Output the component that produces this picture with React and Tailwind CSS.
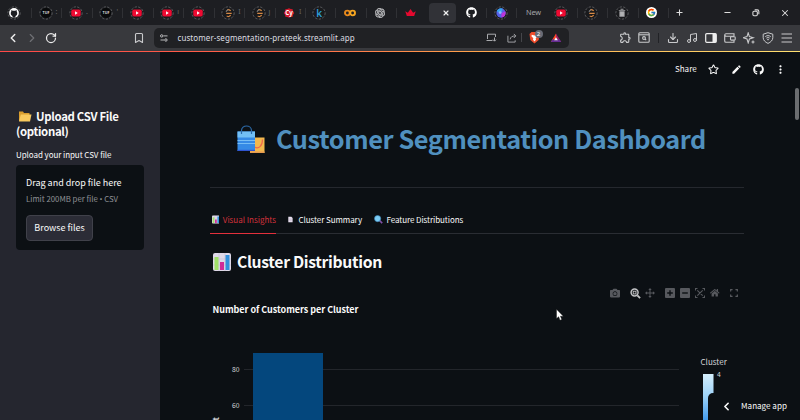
import React from "react";
import { ChevronLeft, ChevronRight, RotateCw, Bookmark, Download, Music, Star, X, Plus, Minus } from "lucide-react";
import { FaGithub, FaCamera, FaHome } from "react-icons/fa";
import { MdEdit, MdMoreVert, MdOutlineExtension } from "react-icons/md";
import { SiOpenai } from "react-icons/si";
import { FcGoogle } from "react-icons/fc";

const Ring = ({ children }) => (
  <svg viewBox="0 0 16 16" className="size-[14px] shrink-0">
    <circle cx="8" cy="8" r="7" fill="#191a1d" stroke="#77787b" strokeWidth="0.8" strokeDasharray="2.6 1.6" />
    {children}
  </svg>
);

const YouTube = () => (
  <Ring>
    <rect x="2.6" y="4" width="10.8" height="8" rx="2" fill="#ee0b32" />
    <path d="M6.9 6.1 10 8 6.900 9.900z" fill="#fff" />
  </Ring>
);

const Tuf = () => (
  <Ring>
    <circle cx="8" cy="8" r="5.800" fill="#08090a" />
    <text x="8" y="9.600" fontSize="4.200" fontWeight="700" fill="#ddd" textAnchor="middle">TUF</text>
  </Ring>
);

const Leet = () => (
  <Ring>
    <path d="M8.500 3.500 5.600 6.300" fill="none" stroke="#8b8b8b" strokeWidth="1.200" />
    <path d="M7.500 4.700c1.200-.9 2.600-.2 3.500 1M6 8.300h6.200M6.500 11.300c1.500 1.300 3.200.8 4.500-.8" fill="none" stroke="#d98a45" strokeWidth="1.400" />
  </Ring>
);

const Tab = ({ children, label, sep = true }) => (
  <div className="relative flex h-full w-[30.45px] shrink-0 items-center pl-[6.500px]">
    {children}
    {label && <span className="ml-[3px] text-[7px] text-[#66676b]">{label}</span>}
    {sep && <span className="absolute right-0 top-[8px] h-[10px] w-px bg-[#303135]" />}
  </div>
);

const TabBar = () => (
  <div className="flex h-[25px] shrink-0 items-center bg-[#1d1e22] font-['Noto_Sans']">
    <div className="relative flex h-full w-8 shrink-0 items-center pl-[7px]">
      <Ring><circle cx="8" cy="8" r="5.600" fill="#fff" /><path d="M6.300 13.500v-2.200C4.900 11 4.300 9.900 4.300 8.300c0-.9.2-1.400.6-1.900l.1-1.800 1.600.8h2.800l1.600-.8.1 1.800c.4.5.6 1 .6 1.900 0 1.600-.6 2.700-2 3v2.200z" fill="#1d1e22" /></Ring>
      <span className="absolute right-0 top-[8px] h-[10px] w-px bg-[#303135]" />
    </div>
    <Tab label=":"><Tuf /></Tab>
    <Tab label="."><YouTube /></Tab>
    <Tab label="'"><Tuf /></Tab>
    <Tab><YouTube /></Tab>
    <Tab label="ı"><YouTube /></Tab>
    <Tab><YouTube /></Tab>
    <Tab label="I"><Leet /></Tab>
    <Tab label="ȷ"><Leet /></Tab>
    <Tab label="I">
      <svg viewBox="0 0 16 16" className="size-[14px] shrink-0">
        <path d="m8 2.500 2 .9 2.200.2.200 2.200L14 8l-1.600 2.200-.2 2.200-2.200.2-2 .9-2-.9-2.200-.2-.2-2.200L2 8l1.600-2.200.2-2.200L6 3.400z" fill="#d31a2b" />
        <text x="8" y="10.300" fontSize="7" fontWeight="700" fill="#fff" textAnchor="middle">Cy</text>
      </svg>
    </Tab>
    <Tab>
      <Ring><text x="8.200" y="12" fontSize="11.500" fontWeight="600" fill="#2e9fd6" textAnchor="middle">k</text></Ring>
    </Tab>
    <Tab>
      <svg viewBox="0 0 16 16" className="size-[14px] shrink-0" fill="none" strokeWidth="2.200">
        <circle cx="5" cy="8" r="2.700" stroke="#e98a1c" /><circle cx="11" cy="8" r="2.700" stroke="#f6a621" />
      </svg>
    </Tab>
    <Tab><span className="pl-[2px]"><SiOpenai size={10} color="#c8c9cb" stroke="#c8c9cb" strokeWidth={0.8} /></span></Tab>
    <div className="flex h-full w-8 shrink-0 items-center pl-[8px]">
      <svg viewBox="0 0 12 8" className="h-[7px] w-[11px]"><path d="M0 2.500 3 4.300 6 0l3 4.300L12 2.500 10.200 8H1.800z" fill="#e5092f" /></svg>
    </div>
    <div className="flex h-[20px] w-[27px] shrink-0 items-center justify-center rounded-[4px] bg-[#313237] pl-[7px]"><X size={8} strokeWidth={3.500} color="#eee" /></div>
    <div className="relative flex h-full w-[30.400px] shrink-0 items-center justify-center"><FaGithub size={11} color="#fff" /><span className="absolute right-0 top-[8px] h-[10px] w-px bg-[#303135]" /></div>
    <Tab>
      <span className="ml-[1px]"><Ring>
        <circle cx="8" cy="8" r="5.300" fill="#5661e8" /><path d="M3 6a5.300 5.300 0 0 1 7-2.900L8 8z" fill="#35a7ef" /><path d="M8.500 8.200 13 6a5.200 5.200 0 0 1-4.500 7.200z" fill="#bb36d9" /><circle cx="7" cy="7.500" r="1.600" fill="#8fb8ff" />
      </Ring></span>
    </Tab>
    <div className="relative flex h-full w-[30.400px] shrink-0 items-center pl-[9px] text-[7.300px] text-[#a5a6a9]"><span className="tracking-[-0.2px]">New</span></div>
    <Tab><YouTube /></Tab>
    <Tab><Leet /></Tab>
    <Tab><Ring><path d="M4.300 4.500h7.400v1H4.300zM6.300 3.200h3.400v1.200H6.300zM5 6h6v6.300H5z" fill="#a4a5a8" /><path d="M7 7v4.300M9 7v4.300" stroke="#c8c8c8" strokeWidth=".7" /></Ring></Tab>
    <Tab><span className="ml-[1px] flex size-[11px] items-center justify-center rounded-full bg-white"><FcGoogle size={9} /></span></Tab>
    <div className="ml-[6px] flex w-[10px] shrink-0"><Plus size={9} strokeWidth={2.800} color="#ddd" /></div>
    <div className="ml-auto mr-[10px] flex items-center gap-[20px]">
      <Minus size={9} strokeWidth={3} color="#ddd" />
      <svg viewBox="0 0 9 9" className="size-[8px]" fill="none" stroke="#ddd" strokeWidth="1.200"><rect x="1" y="2.500" width="5" height="5" rx="1.200" /><path d="M3 1h3a1.700 1.700 0 0 1 1.700 1.700V6" /></svg>
      <X size={10} strokeWidth={2.500} color="#ddd" />
    </div>
  </div>
);

const Toolbar = () => (
  <div className="flex h-[26px] shrink-0 items-center bg-[#38393d] pb-[1px] text-[#c9cacc]">
    <ChevronLeft size={14} strokeWidth={2.500} className="ml-[6px]" color="#ececec" />
    <ChevronRight size={14} strokeWidth={2} className="ml-[5px]" color="#6f7074" />
    <RotateCw size={12} strokeWidth={2.500} className="ml-[6px]" color="#ececec" />
    <Bookmark size={12} strokeWidth={2.200} className="ml-[76px]" />
    <div className="ml-[8.500px] flex h-[20px] w-[415px] shrink-0 items-center rounded-[5px] bg-[#202124] pl-[6px]">
      <svg viewBox="0 0 8 8" className="size-[8px]" fill="none" stroke="#c9cacc" strokeWidth="0.900"><circle cx="1.700" cy="1.900" r="1.200" /><path d="M3.500 1.900h4M.5 6h3.500" /><circle cx="5.900" cy="6" r="1.200" /></svg>
      <span className="ml-[10px] w-[180px] whitespace-nowrap font-['Noto_Sans'] text-[8px] tracking-[0.080px] text-[#dcdde0]">customer-segmentation-prateek.streamlit.app</span>
      <svg viewBox="0 0 11 9" className="ml-[128px] h-[9px] w-[11px]" fill="none" stroke="#a9aaad" strokeWidth="1"><path d="M1.500 6V1.200h8V4M.5 7.500h6M8.500 4.500v3.500M7 6.700l1.500 1.500L10 6.700" /></svg>
      <svg viewBox="0 0 11 11" className="ml-[10px] size-[10px]" fill="none" stroke="#a9aaad" strokeWidth="1"><path d="M1 3v7h8V8M3.500 7c.3-2.600 2-3.800 6-3.800M7.500 1l2.200 2.200-2.200 2.300" /></svg>
      <span className="ml-[4px] h-[9px] w-px bg-[#45464a]" />
      <span className="relative ml-[7px] h-[13px] w-[14px]">
        <svg viewBox="0 0 11 13" className="h-[13px] w-[11px]"><path d="M2.500 1h6L10.500 3l-.8 6-4.200 3.500L1.300 9 .5 3z" fill="#f04d2b" /><path d="m2.800 3.800 2.700.6 2.700-.6.4 1.400-1.900 2.100.3 1.400-1.500 1.700L4 8.700l.3-1.400-1.900-2.100z" fill="#fff" /></svg>
        <span className="absolute left-[6px] top-[-1px] flex size-[8px] items-center justify-center rounded-full bg-[#686b75] font-['Noto_Sans'] text-[6px] leading-none text-white">2</span>
      </span>
      <svg viewBox="0 0 12 11" className="ml-[7px] h-[10px] w-[12px]"><path d="M6 .5.300 10h5.700z" fill="#ff4724" /><path d="m6 .5 5.700 9.500H6z" fill="#9e1f63" /><path d="M.3 10h11.400L9.900 7H2.100z" fill="#662d91" /><path d="M6 4.600 8 8H4z" fill="#fff" /></svg>
    </div>
    <div className="ml-[50px] flex items-center">
      <MdOutlineExtension size={13} />
      <svg viewBox="0 0 12 11" className="ml-[6px] h-[11px] w-[12px]" fill="none" stroke="currentColor" strokeWidth="1.100"><rect x=".8" y=".8" width="10.400" height="9.400" rx="1" /><path d="M1 2.800h10" /><circle cx="6" cy="6" r="1.400" /><path d="m7 7 1.200 1.200" /></svg>
      <span className="ml-[8px] h-[10px] w-px bg-[#212226]" />
      <Download size={12} strokeWidth={2.200} className="ml-[8.500px]" />
      <Music size={12} strokeWidth={2} className="ml-[7px]" />
      <svg viewBox="0 0 12 10" className="ml-[7px] h-[10px] w-[12px]"><rect x=".7" y=".7" width="10.600" height="8.600" rx="1" fill="none" stroke="#eee" strokeWidth="1.200" /><path d="M7.500 1H11v8H7.500z" fill="#eee" /></svg>
      <svg viewBox="0 0 12 10" className="ml-[7px] h-[10px] w-[12px]" fill="none" stroke="currentColor" strokeWidth="1.100"><path d="M10 3V.8H2A1.300 1.300 0 0 0 .7 2v6A1.300 1.300 0 0 0 2 9.300h8V7.500M.9 2.500 2 3.200h8" /><rect x="6.500" y="3.700" width="4.700" height="3.400" rx=".8" /></svg>
      <svg viewBox="0 0 12 12" className="ml-[7px] size-[12px]" fill="none" stroke="currentColor" strokeWidth="1.100"><path d="M5.200.8 6.400 4.600 10.300 5.800 6.400 7 5.200 10.900 4 7 .2 5.800l3.800-1.200z" /><path d="M10 8.500v3M8.500 10h3" /></svg>
      <svg viewBox="0 0 12 12" className="ml-[7px] size-[12px]" fill="none" stroke="currentColor" strokeWidth="1"><path d="m6 .7 4.800 1.500v3.500c0 2.500-2 4.500-4.800 5.700C3.200 10.200 1.200 8.200 1.200 5.700V2.200z" /><path d="M3.300 4.600c1.600-1.300 3.800-1.300 5.400 0M4.400 6.100c1-.8 2.200-.8 3.200 0" /><circle cx="6" cy="7.600" r=".5" /></svg>
      <svg viewBox="0 0 12 12" className="ml-[7px] size-[12px]" stroke="currentColor" strokeWidth="1.100"><path d="M.5 2h10.500M.5 6h10.500M.5 10h10.500" /></svg>
    </div>
  </div>
);

const Folder = () => (
  <svg viewBox="0 0 14 12" className="h-[12px] w-[14px]"><path d="M1 1.500h4L6 3h5.500v8H1z" fill="#d99d2e" /><path d="M2.800 4.500H13.500L12 11.500H1z" fill="#f8c95e" /></svg>
);
const BarEmoji = ({ className }) => (
  <svg viewBox="0 0 18 18" className={className}><rect width="18" height="18" rx="2" fill="#dfd9e8" /><path d="M6 0v18M12 0v18M0 6h18M0 12h18" stroke="#c5bdd2" strokeWidth=".6" /><rect x="1.500" y="4" width="4" height="13" fill="#a0df67" /><rect x="7" y="9" width="4" height="8" fill="#d02b98" /><rect x="12.500" y="2" width="4" height="15" fill="#3290dc" /></svg>
);
const Bags = () => (
  <svg viewBox="0 0 28 29" className="h-[29px] w-[28px]">
    <path d="M13 12.500h14.500V28H13z" fill="#f3b84e" /><path d="M13 26.500h14.500V28H13z" fill="#e69b50" /><path d="M17.500 22c4 2.500 8-1 8-7.500" fill="none" stroke="#ef674d" strokeWidth="1.200" />
    <path d="M.5 6.500h17.500V26H.5z" fill="#358ae6" /><path d="M.5 6.500h17.500v6H.5z" fill="#72bff5" /><path d="M.5 15.500H18M.5 18.500H18" stroke="#76bdf5" strokeWidth="1.100" /><path d="M.5 24.800H18V26H.5z" fill="#2f55d1" />
    <path d="M4.500 9V5.500c0-6 10-6 10 0V9" fill="none" stroke="#2c6aa9" strokeWidth="1.200" />
  </svg>
);

const Sidebar = () => (
  <aside className="flex w-[160px] shrink-0 flex-col bg-[#25262f] px-4 pt-[56.500px] text-[#fafafa]">
    <h2 className="text-[11.400px] font-bold leading-[15px] tracking-[-0.320px]"><span className="flex items-center"><span className="ml-[2px] mr-[4px]"><Folder /></span>Upload CSV File</span>(optional)</h2>
    <p className="mt-[10.500px] text-[8px] leading-[12px] tracking-[-0.060px]">Upload your input CSV file</p>
    <div className="mt-[4px] flex h-[85px] w-[128px] flex-col items-start rounded-[4px] bg-[#0c1014] pl-[10px] pt-[11px]">
      <span className="text-[9px] leading-[14px]">Drag and drop file here</span>
      <span className="mt-[3px] text-[7.800px] leading-[11px] text-[#8f9095]">Limit 200MB per file <span className="font-['Noto_Sans']">•</span> CSV</span>
      <button className="mt-[9.500px] flex h-[26px] w-[67px] items-center justify-center rounded-[4px] border border-[#40414a] bg-[#2b2c36] text-[9px]">Browse files</button>
    </div>
  </aside>
);

const Modebar = () => (
  <div className="flex h-[12px] items-center pl-[400px] text-[#57595e]">
    <FaCamera size={10} />
    <svg viewBox="0 0 12 12" className="ml-[10px] size-[11px]" fill="none" stroke="#c4c5c7"><circle cx="5" cy="5" r="3.800" strokeWidth="1.600" /><path d="m8 8 3 3" strokeWidth="2" /><rect x="3.500" y="3.500" width="3" height="3" strokeWidth="1" /></svg>
    <svg viewBox="0 0 12 12" className="ml-[4px] size-[10px]" fill="currentColor"><path d="m6 0 2 2.500H6.600v2.900h2.900V4L12 6 9.500 8V6.600H6.600v2.900H8L6 12 4 9.500h1.400V6.600H2.500V8L0 6l2.500-2v1.400h2.900V2.500H4z" /></svg>
    <svg viewBox="0 0 10 10" className="ml-[10px] size-[10px]"><rect width="10" height="10" rx="1" fill="currentColor" /><path d="M5 2.200v5.600M2.200 5h5.600" stroke="#0c1014" strokeWidth="1.400" /></svg>
    <svg viewBox="0 0 10 10" className="ml-[5px] size-[10px]"><rect width="10" height="10" rx="1" fill="currentColor" /><path d="M2.200 5h5.600" stroke="#0c1014" strokeWidth="1.400" /></svg>
    <svg viewBox="0 0 10 10" className="ml-[5px] size-[10px]" fill="none" stroke="currentColor" strokeWidth="1.100"><path d="M.5 2.500v-2h2M7.500.5h2v2M9.500 7.500v2h-2M2.500 9.500h-2v-2M2.300 2.300l5.400 5.400M7.700 2.300 2.300 7.700" /></svg>
    <FaHome size={9.500} className="ml-[5px]" />
    <svg viewBox="0 0 10 10" className="ml-[10px] size-[8px]" fill="none" stroke="currentColor" strokeWidth="1.500"><path d="M.8 3.200V.8h2.400M6.800.8h2.400v2.400M9.200 6.800v2.400H6.800M3.200 9.200H.8V6.800" /></svg>
  </div>
);

const Chart = () => (
  <svg viewBox="0 0 534 110" className="block h-[110px] w-[534px]" fontSize="6.800" fill="#d4d5d8">
    <defs><linearGradient id="blues" x1="0" y1="0" x2="0" y2="1"><stop offset="0" stopColor="#d5effc" /><stop offset=".45" stopColor="#9fd3f8" /><stop offset="1" stopColor="#3c97ec" /></linearGradient></defs>
    <path d="M34 59.500h435M34 95.500h435" stroke="#23262b" />
    <rect x="43" y="43" width="70" height="70" fill="#04477d" />
    <text x="29.500" y="62" textAnchor="end">80</text>
    <text x="29.500" y="98" textAnchor="end">60</text>
    <text x="9" y="131" fontSize="8" transform="rotate(-90 9 131)" fontWeight="700">Count</text>
    <text x="490.500" y="55" fontSize="8">Cluster</text>
    <rect x="493" y="64" width="10.500" height="48" fill="url(#blues)" />
    <text x="507" y="66.500">4</text>
  </svg>
);

export default function App() {
  return (
    <div className="relative flex h-[420px] w-[800px] flex-col overflow-hidden bg-[#0c1014] font-['Noto_Sans_CJK_SC',sans-serif] text-[#fafafa]">
      <TabBar />
      <Toolbar />
      <div className="flex h-[1px] shrink-0 bg-[linear-gradient(90deg,#ff4848_0%,#ff6548_35%,#ffaa4c_62%,#ffe070_100%)]" />
      <div className="flex min-h-0 flex-1">
        <Sidebar />
        <main className="flex w-[640px] shrink-0 flex-col pl-[50px]">
          <header className="flex h-[34px] shrink-0 items-center pl-[465px]">
            <span className="w-[24px] text-[8px]">Share</span>
            <Star size={11} strokeWidth={2.200} className="ml-[9px]" />
            <MdEdit size={11} className="ml-[12px]" />
            <FaGithub size={11} className="ml-[11px]" />
            <MdMoreVert size={13} className="ml-[9.500px]" />
          </header>
          <h1 className="flex h-[102px] w-[534px] shrink-0 items-center whitespace-nowrap border-b border-[#25282e] pl-[27px] pt-[5px] text-[#5090bf]">
            <span><Bags /></span>
            <span className="ml-[11px] text-[25.300px] font-bold leading-none tracking-[-0.420px]">Customer Segmentation Dashboard</span>
          </h1>
          <nav className="mt-[17px] flex h-[29px] w-[534px] shrink-0 items-stretch gap-[12px] border-b border-[#2a2d33] pt-[1px] text-[8px]">
            <span className="-mb-px flex w-[66px] items-center gap-[3.500px] whitespace-nowrap border-b-[1.500px] border-[#e4303c] pl-[1.500px] text-[#d4303b]"><BarEmoji className="size-[9px]" />Visual Insights</span>
            <span className="flex w-[74px] items-center gap-[5.500px] whitespace-nowrap tracking-[-0.060px]"><svg viewBox="0 0 8 9" className="h-[9px] w-[8px]"><path d="M.5 0h5l2 2v7h-7z" fill="#e8e0ef" /><path d="M2 3.500h4M2 5h4M2 6.500h4" stroke="#b4a8c0" strokeWidth=".6" /></svg>Cluster Summary</span>
            <span className="flex items-center gap-[3.500px] whitespace-nowrap tracking-[-0.070px]"><svg viewBox="0 0 9 9" className="size-[9px]"><path d="m5.500 5.500 2.700 2.700" stroke="#8050a7" strokeWidth="1.700" /><circle cx="3.600" cy="3.600" r="3.100" fill="#7ccdf5" stroke="#3d86b9" strokeWidth=".6" /></svg>Feature Distributions</span>
          </nav>
          <h2 className="mt-[15.500px] flex h-[24px] shrink-0 items-center pl-[3px] text-[15.700px] font-bold leading-none tracking-[-0.320px]"><BarEmoji className="mr-[6px] size-[18px]" /><span>Cluster Distribution</span></h2>
          <div className="mt-[13.500px]"><Modebar /></div>
          <h3 className="ml-[2.500px] mt-[5px] h-[12px] shrink-0 text-[9px] font-bold leading-[12px] tracking-[-0.030px]">Number of Customers per Cluster</h3>
          <div className="-mt-[6px] shrink-0"><Chart /></div>
        </main>
      </div>
      <div className="absolute right-[1px] top-[88px] h-[32px] w-[4px] rounded-full bg-[#6b6d70]" />
      <svg viewBox="0 0 8 12" className="absolute left-[556px] top-[309px] h-[12px] w-[8px]"><path d="M.5.300V9.500l2.200-1.800L4 11.300l1.800-.8-1.400-3.300h2.900z" fill="#fff" stroke="#111" strokeWidth=".4" /></svg>
      <div className="absolute bottom-0 right-0 flex h-[27px] w-[92px] items-center rounded-tl-[5px] bg-[#0c1014] pl-[12px]">
        <ChevronLeft size={13} strokeWidth={3} />
        <span className="ml-[8px] whitespace-nowrap text-[8.100px]">Manage app</span>
      </div>
    </div>
  );
}
